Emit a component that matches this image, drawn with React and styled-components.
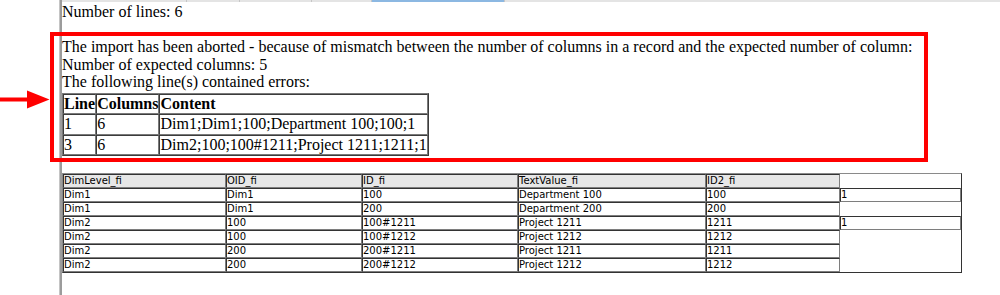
import React from "react";
import styled, { createGlobalStyle } from "styled-components";

const Global = createGlobalStyle`
  html, body { margin: 0; padding: 0; background: #fff; }
  body { font-family: "Liberation Serif", "Times New Roman", serif; color: #000; }
`;

const Page = styled.div`
  position: relative;
  display: flex;
  height: 295px;
  overflow: hidden;
  background: #fff;
`;

const Gutter = styled.div`
  width: 59px;
  flex: none;
`;

const FrameBar = styled.div`
  width: 3px;
  flex: none;
  background: #9c9c9c;
  border-left: 1px solid #c4c4c4;
  box-sizing: border-box;
`;

const Main = styled.div`
  flex: 1;
  display: flex;
  flex-direction: column;
  min-width: 0;
`;

const TabStrip = styled.div`
  display: flex;
  height: 2px;
  flex: none;
`;

const Tab = styled.div`
  flex: ${(p) => (p.$grow ? "1" : "none")};
  width: ${(p) => (p.$w ? `${p.$w}px` : "auto")};
  box-sizing: border-box;
  background: ${(p) => (p.$active ? "#8cb8e2" : "#e4e4e4")};
  border-right: ${(p) => (p.$grow ? "none" : "1px solid #c6c6c6")};
`;

const Content = styled.div`
  padding-top: 1px;
  font-size: 16px;
  line-height: 17.6px;
`;

const Line = styled.div`
  white-space: nowrap;
  min-height: 17.6px;
`;

const ErrorTable = styled.table`
  margin-top: 2px;
  border-collapse: separate;
  border-spacing: 0;
  border: 1px solid;
  border-color: #7a7a7a #3c3c3c #3c3c3c #7a7a7a;
  font-size: 16px;
  line-height: 18.3px;
`;

const ErrCell = styled.td`
  padding: 0;
  border: 1px solid;
  border-color: #3c3c3c #7a7a7a #7a7a7a #3c3c3c;
  text-align: left;
  vertical-align: top;
  white-space: nowrap;
  font-weight: ${(p) => (p.$head ? 700 : 400)};
`;

const DataTable = styled.table`
  margin-top: 17px;
  width: 900px;
  table-layout: fixed;
  border-collapse: separate;
  border-spacing: 0;
  border: 1px solid;
  border-color: #8a8a8a #333 #333 #8a8a8a;
  font-family: "DejaVu Sans", Verdana, sans-serif;
  font-size: 10px;
  line-height: 12px;
`;

const DataCell = styled.td`
  padding: 0;
  height: 12px;
  border: 1px solid;
  border-color: #333 #7e7e7e #7e7e7e #333;
  white-space: nowrap;
  overflow: hidden;
  vertical-align: top;
  text-align: left;
  font-weight: 400;
  background: ${(p) => (p.$head ? "#e7e7e7" : "#fff")};
`;

const Highlight = styled.div`
  position: absolute;
  left: 50px;
  top: 32px;
  width: 878px;
  height: 130px;
  box-sizing: border-box;
  border: 4px solid #ff0000;
  pointer-events: none;
`;

const ArrowSvg = styled.svg`
  position: absolute;
  left: 0;
  top: 90px;
  width: 52px;
  height: 21px;
`;

const errorRows = [
  ["1", "6", "Dim1;Dim1;100;Department 100;100;1"],
  ["3", "6", "Dim2;100;100#1211;Project 1211;1211;1"],
];

const colWidths = [163, 136, 156, 188, 134, 121];
const headers = ["DimLevel_fi", "OID_fi", "ID_fi", "TextValue_fi", "ID2_fi"];
const dataRows = [
  ["Dim1", "Dim1", "100", "Department 100", "100", "1"],
  ["Dim1", "Dim1", "200", "Department 200", "200"],
  ["Dim2", "100", "100#1211", "Project 1211", "1211", "1"],
  ["Dim2", "100", "100#1212", "Project 1212", "1212"],
  ["Dim2", "200", "200#1211", "Project 1211", "1211"],
  ["Dim2", "200", "200#1212", "Project 1212", "1212"],
];

export default function App() {
  return (
    <>
      <Global />
      <Page>
        <Gutter />
        <FrameBar />
        <Main>
          <TabStrip>
            <Tab $w={125} />
            <Tab $w={53} />
            <Tab $w={72} />
            <Tab $w={60} />
            <Tab $w={133} $active />
            <Tab $grow />
          </TabStrip>
          <Content>
            <Line>Number of lines: 6</Line>
            <Line />
            <Line>
              The import has been aborted - because of mismatch between the number of columns in a record and the expected number of column:
            </Line>
            <Line>Number of expected columns: 5</Line>
            <Line>The following line(s) contained errors:</Line>
            <ErrorTable>
              <tbody>
                <tr>
                  <ErrCell as="th" $head>Line</ErrCell>
                  <ErrCell as="th" $head>Columns</ErrCell>
                  <ErrCell as="th" $head>Content</ErrCell>
                </tr>
                {errorRows.map((r, i) => (
                  <tr key={i}>
                    {r.map((c, j) => (
                      <ErrCell key={j}>{c}</ErrCell>
                    ))}
                  </tr>
                ))}
              </tbody>
            </ErrorTable>
            <DataTable>
              <colgroup>
                {colWidths.map((w, i) => (
                  <col key={i} style={{ width: `${w}px` }} />
                ))}
              </colgroup>
              <tbody>
                <tr>
                  {headers.map((h) => (
                    <DataCell as="th" key={h} $head>
                      {h}
                    </DataCell>
                  ))}
                </tr>
                {dataRows.map((r, i) => (
                  <tr key={i}>
                    {r.map((c, j) => (
                      <DataCell key={j}>{c}</DataCell>
                    ))}
                  </tr>
                ))}
              </tbody>
            </DataTable>
          </Content>
        </Main>
        <Highlight />
        <ArrowSvg viewBox="0 0 52 21">
          <rect x="0" y="7.5" width="29" height="4" fill="#ff0000" />
          <polygon points="27,0.5 49.5,9.5 27,18.5" fill="#ff0000" />
        </ArrowSvg>
      </Page>
    </>
  );
}
